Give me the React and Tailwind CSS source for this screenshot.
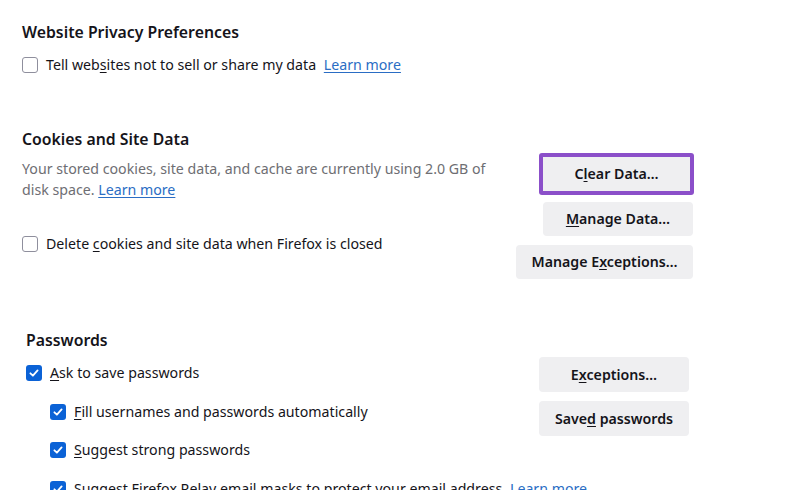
const font = { fontFamily: '"Noto Sans", "Open Sans", sans-serif' };

function Box({ checked }) {
  if (checked) {
    return (
      <span className="flex h-4 w-4 shrink-0 items-center justify-center rounded-[3px] bg-[#0b62d6]">
        <svg width="12" height="12" viewBox="0 0 12 12" fill="none">
          <path d="M2.4 6.3 L4.9 8.7 L9.6 3.4" stroke="white" strokeWidth="1.8" strokeLinecap="round" strokeLinejoin="round" />
        </svg>
      </span>
    );
  }
  return <span className="h-4 w-4 shrink-0 rounded-[3px] border border-[#8f8f9d] bg-white" />;
}

function Row({ checked, children }) {
  return (
    <div className="flex h-6 items-center gap-2">
      <Box checked={checked} />
      <span className="text-[14.2px] text-[#15141a] whitespace-nowrap">{children}</span>
    </div>
  );
}

function Btn({ w, children }) {
  return (
    <div className={`flex h-[34px] items-center justify-center rounded-[4px] bg-[#efeff1] text-[14.2px] font-semibold text-[#15141a] ${w}`}>
      <span className="whitespace-nowrap">{children}</span>
    </div>
  );
}

const Link = ({ children }) => <span className="text-[#2a6dc4] underline underline-offset-2">{children}</span>;

export default function App() {
  return (
    <div style={font} className="h-[490px] w-[800px] overflow-hidden bg-white pl-[22px] pt-[20px]">
      {/* Website privacy */}
      <h2 className="h-6 text-[15.8px] font-semibold leading-6 text-[#15141a]">Website Privacy Preferences</h2>
      <div className="mt-[9px]">
        <Row>
          Tell web<u className="underline-offset-2">s</u>ites not to sell or share my data <span className="ml-1"><Link>Learn more</Link></span>
        </Row>
      </div>

      {/* Cookies */}
      <h2 className="mt-[50px] h-6 text-[15.8px] font-semibold leading-6 text-[#15141a]">Cookies and Site Data</h2>
      <div className="mt-[2px] flex w-[672px] justify-between">
        <div className="mt-[5px] flex flex-col">
          <p className="w-[470px] text-[14.2px] leading-[21px] text-[#6e6e73]">
            Your stored cookies, site data, and cache are currently using 2.0 GB of disk space. <Link>Learn more</Link>
          </p>
          <div className="mt-[32px]">
            <Row>
              Delete <u className="underline-offset-2">c</u>ookies and site data when Firefox is closed
            </Row>
          </div>
        </div>
        <div className="flex flex-col items-end">
          <div className="rounded-[3px] bg-[#8b4fc9] p-[4px]">
            <div className="flex h-[34px] w-[147px] items-center justify-center bg-[#efeff1] text-[14.2px] font-semibold text-[#15141a]">
              <span>C<u className="underline-offset-2">l</u>ear Data…</span>
            </div>
          </div>
          <div className="mt-[7px] mr-px">
            <Btn w="w-[150px]">
              <u className="underline-offset-2">M</u>anage Data…
            </Btn>
          </div>
          <div className="mt-[9px] mr-px">
            <Btn w="w-[177px]">
              Manage E<u className="underline-offset-2">x</u>ceptions…
            </Btn>
          </div>
        </div>
      </div>

      {/* Passwords */}
      <div className="mt-[49px] pl-[4px]">
        <h2 className="h-6 text-[15.8px] font-semibold leading-6 text-[#15141a]">Passwords</h2>
        <div className="mt-[5px] grid grid-cols-[513px_150px]">
          <div className="mt-[4px] flex flex-col gap-[14.5px]">
            <Row checked>
              <u className="underline-offset-2">A</u>sk to save passwords
            </Row>
            <div className="flex flex-col gap-[14.5px] pl-6">
              <Row checked>
                <u className="underline-offset-2">F</u>ill usernames and passwords automatically
              </Row>
              <Row checked>
                <u className="underline-offset-2">S</u>uggest strong passwords
              </Row>
              <Row checked>
                Suggest Firefox Relay email masks to protect your email address <span className="ml-1"><Link>Learn more</Link></span>
              </Row>
            </div>
          </div>
          <div className="flex flex-col gap-[9px]">
            <Btn w="w-[150px] h-[35px]">
              E<u className="underline-offset-2">x</u>ceptions…
            </Btn>
            <Btn w="w-[150px] h-[35px]">
              Save<u className="underline-offset-2">d</u> passwords
            </Btn>
          </div>
        </div>
      </div>
    </div>
  );
}
